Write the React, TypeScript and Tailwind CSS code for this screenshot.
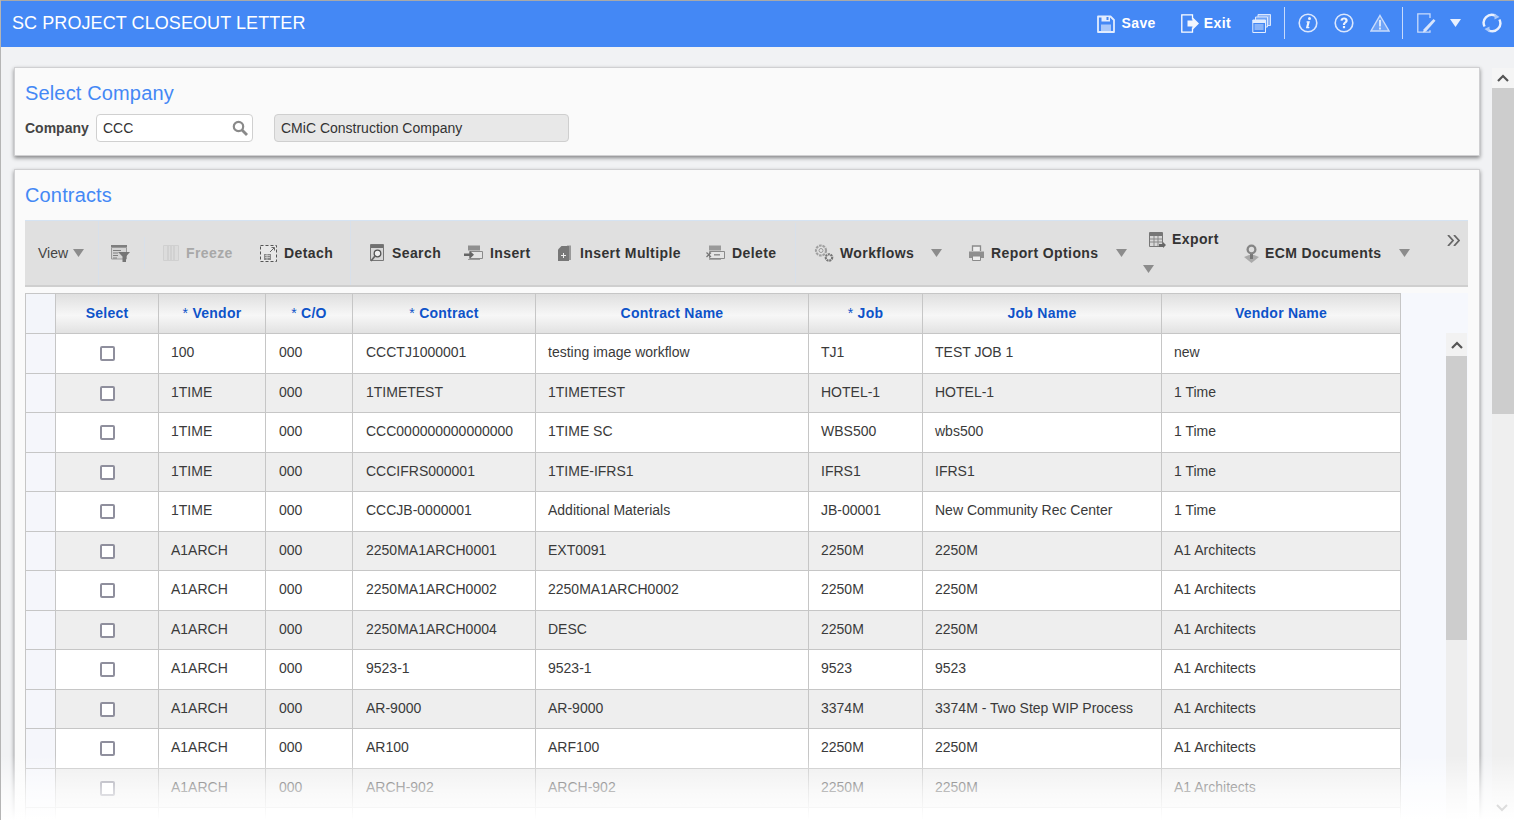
import React from "react";

const rows = [
  ["100", "000", "CCCTJ1000001", "testing image workflow", "TJ1", "TEST JOB 1", "new"],
  ["1TIME", "000", "1TIMETEST", "1TIMETEST", "HOTEL-1", "HOTEL-1", "1 Time"],
  ["1TIME", "000", "CCC00000000000000000", "1TIME SC", "WBS500", "wbs500", "1 Time"],
  ["1TIME", "000", "CCCIFRS000001", "1TIME-IFRS1", "IFRS1", "IFRS1", "1 Time"],
  ["1TIME", "000", "CCCJB-0000001", "Additional Materials", "JB-00001", "New Community Rec Center", "1 Time"],
  ["A1ARCH", "000", "2250MA1ARCH0001", "EXT0091", "2250M", "2250M", "A1 Architects"],
  ["A1ARCH", "000", "2250MA1ARCH0002", "2250MA1ARCH0002", "2250M", "2250M", "A1 Architects"],
  ["A1ARCH", "000", "2250MA1ARCH0004", "DESC", "2250M", "2250M", "A1 Architects"],
  ["A1ARCH", "000", "9523-1", "9523-1", "9523", "9523", "A1 Architects"],
  ["A1ARCH", "000", "AR-9000", "AR-9000", "3374M", "3374M - Two Step WIP Process", "A1 Architects"],
  ["A1ARCH", "000", "AR100", "ARF100", "2250M", "2250M", "A1 Architects"],
  ["A1ARCH", "000", "ARCH-902", "ARCH-902", "2250M", "2250M", "A1 Architects"],
  ["", "", "", "", "", "", ""],
];
const headers = ["Select", "* Vendor", "* C/O", "* Contract", "Contract Name", "* Job", "Job Name", "Vendor Name"];
const gridCols = "grid grid-cols-[31px_103px_107px_87px_183px_273px_114px_239px_239px]";

function Caret({ className = "" }: { className?: string }) {
  return (
    <svg width="11" height="8" viewBox="0 0 11 8" className={className}>
      <path d="M0 0h11L5.5 8z" fill="#8c8c8c" />
    </svg>
  );
}

const I = ({ children, w = 20, h = 20 }: { children: React.ReactNode; w?: number; h?: number }) => (
  <svg width={w} height={h} viewBox={`0 0 ${w} ${h}`} className="shrink-0">{children}</svg>
);

function ToolItem({ w, icon, label, disabled, gap = "gap-[7px]" }: { w: string; icon: React.ReactNode; label: string; disabled?: boolean; gap?: string }) {
  return (
    <div className={`flex items-center ${gap} ${w} shrink-0`}>
      {icon}
      <span className={`text-[14px] font-bold tracking-[0.4px] ${disabled ? "text-[#a8a8a8]" : "text-[#333333]"}`}>{label}</span>
    </div>
  );
}

const insertIcon = (
  <I w={20} h={16}>
    <path d="M4 .5h12v5H4z" fill="#8f8f8f" />
    <path d="M5.5 6.5h13v7h-13z" fill="#e4e4e4" stroke="#8a8a8a" />
    <path d="M4 14.5h12" stroke="#9a9a9a" />
    <path d="M0 8.5h6V6l4 3.7-4 3.7V11H0z" fill="#666" />
  </I>
);

const deleteIcon = (
  <I w={19} h={16}>
    <path d="M3 .5h12v5H3z" fill="#9a9a9a" />
    <path d="M3.5 6.5h15v7h-15z" fill="#e4e4e4" stroke="#8a8a8a" />
    <path d="M3 14.5h12" stroke="#a5a5a5" />
    <path d="M.5 7.5l4.5 4.5M5 7.5L.5 12" stroke="#777" strokeWidth="1.3" />
    <path d="M8 9.8h6" stroke="#888" strokeWidth="1.4" />
  </I>
);

export default function App() {
  return (
    <div className="relative h-[820px] w-[1514px] overflow-hidden border-l border-[#b5b5b5] bg-[#f1f2f4] font-['Liberation_Sans',Arial,sans-serif] text-[#333333]">
      {/* header */}
      <header className="flex h-[47px] items-center border-t border-[#a9a9a9] bg-[#4488f5] pb-[2px] text-white">
        <h1 className="ml-[11px] text-[18px] font-normal leading-none tracking-[0.08px]">SC PROJECT CLOSEOUT LETTER</h1>
        <div className="ml-[792px] flex items-center">
          <svg width="18" height="19" viewBox="0 0 18 19">
            <path d="M1 2.5h12.5l3.5 3.5v12H1z" fill="#4488f5" stroke="#e3edfe" strokeWidth="1.8" strokeLinejoin="round" />
            <path d="M4.5 2h8.5v5.5H4.5z" fill="#e3edfe" />
            <path d="M9.5 3h2v3h-2z" fill="#4488f5" />
            <path d="M4 10.5h10v6.5H4z" fill="#a9c8fa" />
          </svg>
          <span className="ml-[6px] text-[14px] font-bold tracking-[0.4px]">Save</span>
          <svg className="ml-[25px]" width="18" height="19" viewBox="0 0 18 19">
            <path d="M11.5 5.5V.8H.8v17.4h10.7v-4.7" fill="none" stroke="#fff" strokeWidth="1.3" />
            <path d="M6.5 6.5h5V3L18 9.5 11.5 16v-3.500h-5z" fill="#f2f6fe" />
          </svg>
          <span className="ml-[5px] text-[14px] font-bold tracking-[0.4px]">Exit</span>
          <svg className="ml-[21px]" width="19" height="19" viewBox="0 0 19 19">
            <path d="M6 .5h12.500v11H6z" fill="#8fb6f8" stroke="#dbe7fd" />
            <path d="M3.500 3h12v10h-12z" fill="#6ea3f7" stroke="#dbe7fd" />
            <path d="M.8 6h12.700v12.500H.8z" fill="#4488f5" stroke="#e3edfe" />
            <path d="M.8 6h12.700v3H.8z" fill="#e3edfe" />
            <path d="M2.500 11h9M2.500 13h9M2.500 15h9" stroke="#cfe0fc" />
          </svg>
          <div className="ml-[13px] h-[32px] w-px bg-[#c7dafb]" />
          <svg className="ml-[13px]" width="20" height="20" viewBox="0 0 20 20">
            <circle cx="10" cy="10" r="8.800" fill="none" stroke="#dbe7fd" strokeWidth="1.600" />
            <path d="M8.700 8.300h3.200l-1.500 5.600h1.100l-.3 1.300H7.900l1.400-5.600h-.9z" fill="#eef4fe" />
            <circle cx="11.500" cy="5.600" r="1.500" fill="#eef4fe" />
          </svg>
          <svg className="ml-[16px]" width="20" height="20" viewBox="0 0 20 20">
            <circle cx="10" cy="10" r="8.800" fill="none" stroke="#dbe7fd" strokeWidth="1.600" />
            <path d="M6.400 7.600C6.600 5.400 8.200 4.500 10.100 4.500c2 0 3.600 1.100 3.600 3 0 2.600-2.700 2.400-2.700 4.600H8.900c0-3 2.500-2.900 2.500-4.500 0-.8-.5-1.200-1.300-1.200-.9 0-1.400.5-1.500 1.300z" fill="#eef4fe" />
            <rect x="8.900" y="13" width="2.200" height="2.200" fill="#eef4fe" />
          </svg>
          <svg className="ml-[16px]" width="20" height="18" viewBox="0 0 20 18">
            <path d="M10 1.500L19 17H1z" fill="#6ea3f7" stroke="#c9dbfb" strokeWidth="1.400" />
            <path d="M9 6h2v6.500H9zM9 13.500h2v2H9z" fill="#d8e5fc" />
          </svg>
          <div className="ml-[12px] h-[32px] w-px bg-[#c7dafb]" />
          <svg className="ml-[14px]" width="19" height="20" viewBox="0 0 19 20">
            <path d="M13 5V.8H.8v18.400H13v-2" fill="none" stroke="#c9dbfb" strokeWidth="1.300" />
            <path d="M16.500 6l2 1.800L9 18.500l-3 1 .7-3.300z" fill="#d8e5fc" />
          </svg>
          <svg className="ml-[14px]" width="11" height="8" viewBox="0 0 11 8"><path d="M0 0h11L5.500 8z" fill="#e9f0fe" /></svg>
          <svg className="ml-[21px]" width="20" height="20" viewBox="0 0 20 20">
            <path d="M2.600 13.500A8 8 0 0 1 13.500 2.800" fill="none" stroke="#e9f0fe" strokeWidth="2.400" />
            <path d="M17.400 6.500A8 8 0 0 1 6.500 17.200" fill="none" stroke="#e9f0fe" strokeWidth="2.400" />
            <path d="M12.500.5l5 3.500-5 2.500zM7.500 19.500l-5-3.500 5-2.500z" fill="#a9c8fa" />
          </svg>
        </div>
      </header>

      {/* body */}
      <div className="flex">
        <main className="w-[1479px] shrink-0 pl-[13px] pt-[20px]">
          <section className="h-[89px] border border-[#d0d0d2] bg-[#fafafa] px-[10px] pt-[13px] shadow-[0_2px_4px_rgba(0,0,0,0.45)]">
            <h2 className="text-[20px] leading-[25px] tracking-[0.15px] text-[#4488f5]">Select Company</h2>
            <div className="mt-[8px] flex items-center">
              <label className="w-[71px] text-[14px] font-bold text-[#444]">Company</label>
              <div className="flex h-[28px] w-[157px] items-center justify-between rounded-[4px] border border-[#d0d0d0] bg-white pl-[6px] pr-[4px] text-[14px]">
                CCC
                <svg width="16" height="16" viewBox="0 0 16 16"><circle cx="6.500" cy="6.500" r="4.700" fill="none" stroke="#8a8a8a" strokeWidth="2.200" /><path d="M10 10l5 5" stroke="#8a8a8a" strokeWidth="2.800" /></svg>
              </div>
              <div className="ml-[21px] flex h-[28px] w-[295px] items-center rounded-[4px] border border-[#cfcfcf] bg-[#e8e8e8] pl-[6px] text-[14px]">CMiC Construction Company</div>
            </div>
          </section>

          <section className="mt-[13px] h-[700px] border border-[#d0d0d2] bg-[#fafafa] px-[10px] pt-[13px] shadow-[0_2px_4px_rgba(0,0,0,0.45)]">
            <h2 className="text-[20px] leading-[25px] tracking-[0.15px] text-[#4488f5]">Contracts</h2>

            {/* toolbar */}
            <div className="mt-[12px] flex h-[67px] w-[1443px] items-center border-t border-b-2 border-t-[#d5e3f2] border-b-[#cfcfcf] bg-[#e0e0e0] pl-[13px]">
              <div className="flex w-[60px] shrink-0 items-center gap-[5px] text-[14px] text-[#444]">View <Caret /></div>
              <div className="h-[64px] w-px shrink-0 bg-[#d8e0ea]" />
              <div className="ml-[12px] w-[21px] shrink-0">
                <I w={19} h={17}>
                  <path d="M0 0h16v2.500H0z" fill="#7f7f7f" />
                  <path d="M.5 2.500h15V14H.5z" fill="#d4d4d4" stroke="#9a9a9a" />
                  <path d="M2 5.500h8M2 8h5M2 10.500h5M2 13h4" stroke="#7f7f7f" />
                  <path d="M7 7h12l-4 4.500V17h-3.500v-5.500z" fill="#757575" />
                </I>
              </div>
              <div className="ml-[12px] h-[32px] w-px shrink-0 bg-[#d8e0ea]" />
              <div className="ml-[18px]">
                <ToolItem w="w-[97px]" disabled label="Freeze" icon={<I w={16} h={16}><path d="M.5.500h15v15H.5z" fill="#dcdcdc" stroke="#d0d0d0" /><path d="M5 1v14M8 1v14M11 1v14" stroke="#c6c6c6" /></I>} />
              </div>
              <ToolItem w="w-[90px]" label="Detach" icon={<I w={17} h={18}><path d="M.5 1.500h16v16H.5z" fill="#e8e8e8" stroke="#555" strokeDasharray="3 2" /><path d="M4 10h7v6H4z" fill="#8a8a8a" /><path d="M5 11.500h5M5 13.500h5M7 10v6" stroke="#ddd" strokeWidth=".7" /><path d="M10 8l4-4M11.500 3.500h3v3" fill="none" stroke="#666" /></I>} />
              <div className="h-[64px] w-px shrink-0 bg-[#d8e0ea]" />
              <div className="ml-[18px]">
                <ToolItem w="w-[95px]" gap="gap-[8px]" label="Search" icon={<I w={15} h={18}><path d="M1.500.5h13v16h-13z" fill="#d8d8d8" stroke="#777" /><path d="M2 1h12v3H2z" fill="#707070" /><circle cx="8.500" cy="9.500" r="3.300" fill="#efefef" stroke="#555" strokeWidth="1.300" /><path d="M6 12L2 17" stroke="#666" strokeWidth="1.800" /></I>} />
              </div>
              <ToolItem w="w-[94px]" gap="gap-[6px]" label="Insert" icon={insertIcon} />
              <ToolItem w="w-[148px]" gap="gap-[9px]" label="Insert Multiple" icon={<I w={13} h={16}><path d="M9 .5h4V15H9z" fill="#999" /><path d="M0 4.500L3.500 1H11v15H0z" fill="#777" /><path d="M5.500 8v5M3 10.500h5" stroke="#eee" /></I>} />
              <ToolItem w="w-[89px]" label="Delete" icon={deleteIcon} />
              <div className="h-[60px] w-px shrink-0 bg-[#d8e0ea]" />
              <div className="ml-[18px]">
                <ToolItem w="w-[117px]" gap="gap-[6px]" label="Workflows" icon={<I w={20} h={18}><circle cx="7" cy="6.500" r="5" fill="#e2e2e2" stroke="#a0a0a0" strokeWidth="2.200" strokeDasharray="2.600 .9" /><circle cx="7" cy="6.500" r="2" fill="none" stroke="#999" /><circle cx="15" cy="13.500" r="3.200" fill="#e2e2e2" stroke="#757575" strokeWidth="2.200" strokeDasharray="2 .7" /></I>} />
              </div>
              <Caret className="shrink-0" />
              <div className="ml-[27px]">
                <ToolItem w="w-[147px]" label="Report Options" icon={<I w={15} h={16}><path d="M3.500 6V1h8v5" fill="#eee" stroke="#8a8a8a" strokeWidth="1.300" /><path d="M0 6.500h15V13h-3v-2H3v2H0z" fill="#8f8f8f" /><path d="M3.500 11h8v4.500h-8z" fill="#eee" stroke="#8a8a8a" /></I>} />
              </div>
              <Caret className="shrink-0" />
              <div className="relative ml-[16px] h-[64px] w-[101px] shrink-0">
                <div className="ml-[6px] mt-[8px]">
                  <ToolItem w="w-[90px]" gap="gap-[6px]" label="Export" icon={<I w={17} h={16}><path d="M.5.500h13v14H.5z" fill="#d8d8d8" stroke="#777" /><path d="M1 1h12v3H1z" fill="#777" /><path d="M1 7h12M1 10h12M5 4v10M9 4v10" stroke="#888" /><path d="M10 12h4v-2l3 3-3 3v-1h-4z" fill="#666" /></I>} />
                </div>
                <Caret className="absolute left-0 top-[44px]" />
              </div>
              <ToolItem w="w-[155px]" gap="gap-[6px]" label="ECM Documents" icon={<I w={15} h={19}><path d="M0 13l5-2h5l5 2-7.500 6z" fill="#aaa" /><path d="M6 9h3v6H6z" fill="#777" /><circle cx="7.500" cy="5.500" r="5" fill="#858585" /><circle cx="7.500" cy="5.500" r="2.700" fill="#dedede" /></I>} />
              <Caret className="shrink-0" />
              <svg className="mb-[26px] ml-[37px] shrink-0" width="13" height="11" viewBox="0 0 13 11"><path d="M1 0l5 5.500L1 11M7 0l5 5.500L7 11" fill="none" stroke="#666" strokeWidth="1.800" /></svg>
            </div>

            {/* table region */}
            <div className="mt-[6px] flex h-[560px] w-[1443px] bg-[#f6f8fd]">
              <div className="w-[1376px] shrink-0 bg-white">
                <div className={`${gridCols} h-[41px] border-y border-[#c6c6c6] bg-[linear-gradient(#dfdfdf,#f7f7f7_55%,#e2e2e2)] text-[14px] font-bold tracking-[0.25px] text-[#0e53c9]`}>
                  <div className="border-x border-[#c6c6c6] bg-[#f3f5fa]" />
                  {headers.map((h) => (
                    <div key={h} className="flex items-center justify-center border-r border-[#c6c6c6]">{h.startsWith("* ") ? <><span className="font-normal">*&nbsp;</span>{h.slice(2)}</> : h}</div>
                  ))}
                </div>
                <div className="grid auto-rows-[39.5px]">
                  {rows.map((r, i) => (
                    <div key={i} className={`${gridCols} border-b border-[#c6c6c6] text-[14px] text-[#3a3a3a] ${i % 2 ? "bg-[#eeeeee]" : "bg-white"}`}>
                      <div className="border-x border-[#c6c6c6] bg-[#f5f6fb]" />
                      <div className="flex items-center justify-center border-r border-[#c6c6c6] pt-[1px]">
                        {i < 12 && <div className="h-[15px] w-[15px] rounded-[2px] border-2 border-[#8f8f9d] bg-white" />}
                      </div>
                      {r.map((c, j) => (
                        <div key={j} className={`flex items-center overflow-hidden whitespace-nowrap border-r border-[#c6c6c6] pb-[1px] ${j === 1 || j === 2 ? "pl-[13px]" : "pl-[12px]"}`}>
                          <span className={j === 2 ? "block w-[147px] overflow-hidden" : ""}>{c}</span>
                        </div>
                      ))}
                    </div>
                  ))}
                </div>
              </div>
              <div className="ml-[45px] mt-[40px] flex w-[21px] shrink-0 flex-col bg-[#eeeeee]">
                <div className="flex h-[23px] items-center justify-center bg-[#f2f2f2]">
                  <svg width="12" height="8" viewBox="0 0 12 8"><path d="M1 7l5-5 5 5" fill="none" stroke="#555" strokeWidth="2.200" /></svg>
                </div>
                <div className="h-[284px] bg-[#cdcdcd]" />
              </div>
            </div>
          </section>
        </main>

        <aside className="ml-[12px] mt-[21px] flex h-[752px] w-[22px] shrink-0 flex-col bg-[#efefef]">
          <div className="flex h-[20px] items-center justify-center bg-[#f5f5f5]">
            <svg width="12" height="8" viewBox="0 0 12 8"><path d="M1 7l5-5 5 5" fill="none" stroke="#555" strokeWidth="2.200" /></svg>
          </div>
          <div className="h-[326px] bg-[#cdcdcd]" />
        </aside>
      </div>

      {/* fade */}
      <div className="pointer-events-none absolute inset-x-0 bottom-0 h-[65px] bg-[linear-gradient(rgba(255,255,255,0),rgba(255,255,255,0.65)_55%,#ffffff)]" />
      <svg className="absolute bottom-[8px] left-[1495px]" width="12" height="8" viewBox="0 0 12 8"><path d="M1 1l5 5 5-5" fill="none" stroke="#ddd" strokeWidth="2" /></svg>
    </div>
  );
}
